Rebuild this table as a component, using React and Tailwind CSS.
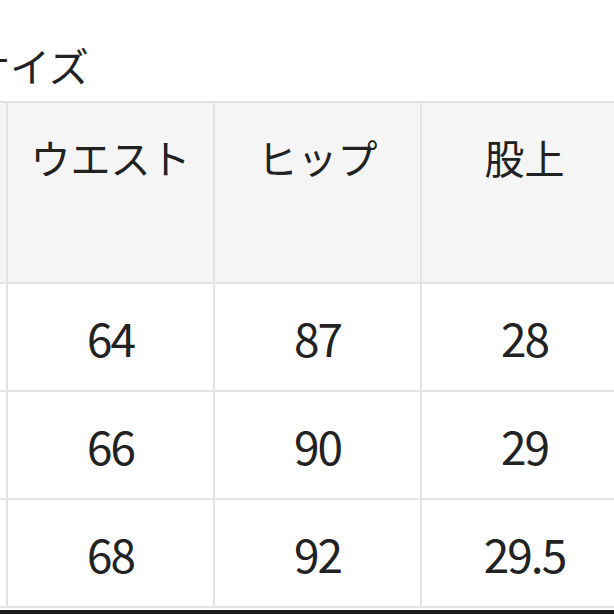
import React from "react";

const jp = { fontFamily: '"Noto Sans CJK JP", "Noto Sans", sans-serif' };

const headers = ["", "ウエスト", "ヒップ", "股上"];
const rows = [
  ["", "64", "87", "28"],
  ["", "66", "90", "29"],
  ["", "68", "92", "29.5"],
];

export default function App() {
  return (
    <div
      className="w-[614px] h-[614px] overflow-hidden bg-white text-[#222]"
      style={jp}
    >
      <div className="ml-[-30px] pt-[41px] h-[101px] text-[40px] leading-[48px] whitespace-nowrap">
        サイズ
      </div>

      <div className="ml-[-199px] w-[830px] border-t-2 border-[#e3e3e3]">
        <div className="flex">
          {headers.map((h, i) => (
            <div
              key={i}
              className="w-[207px] h-[181px] shrink-0 bg-[#f5f5f5] border-r-2 border-b-2 border-[#e3e3e3] text-center text-[40px] leading-[60px] pt-[24px]"
            >
              {h}
            </div>
          ))}
        </div>
        {rows.map((r, ri) => (
          <div key={ri} className="flex">
            {r.map((v, ci) => (
              <div
                key={ci}
                className="w-[207px] h-[108px] shrink-0 bg-white border-r-2 border-b-2 border-[#e3e3e3] flex items-center justify-center text-[46px] tracking-[-2px]"
              >
                {v}
              </div>
            ))}
          </div>
        ))}
      </div>
      <div className="mt-[2px] h-[4px] bg-[#1c1c1c]" />
    </div>
  );
}
